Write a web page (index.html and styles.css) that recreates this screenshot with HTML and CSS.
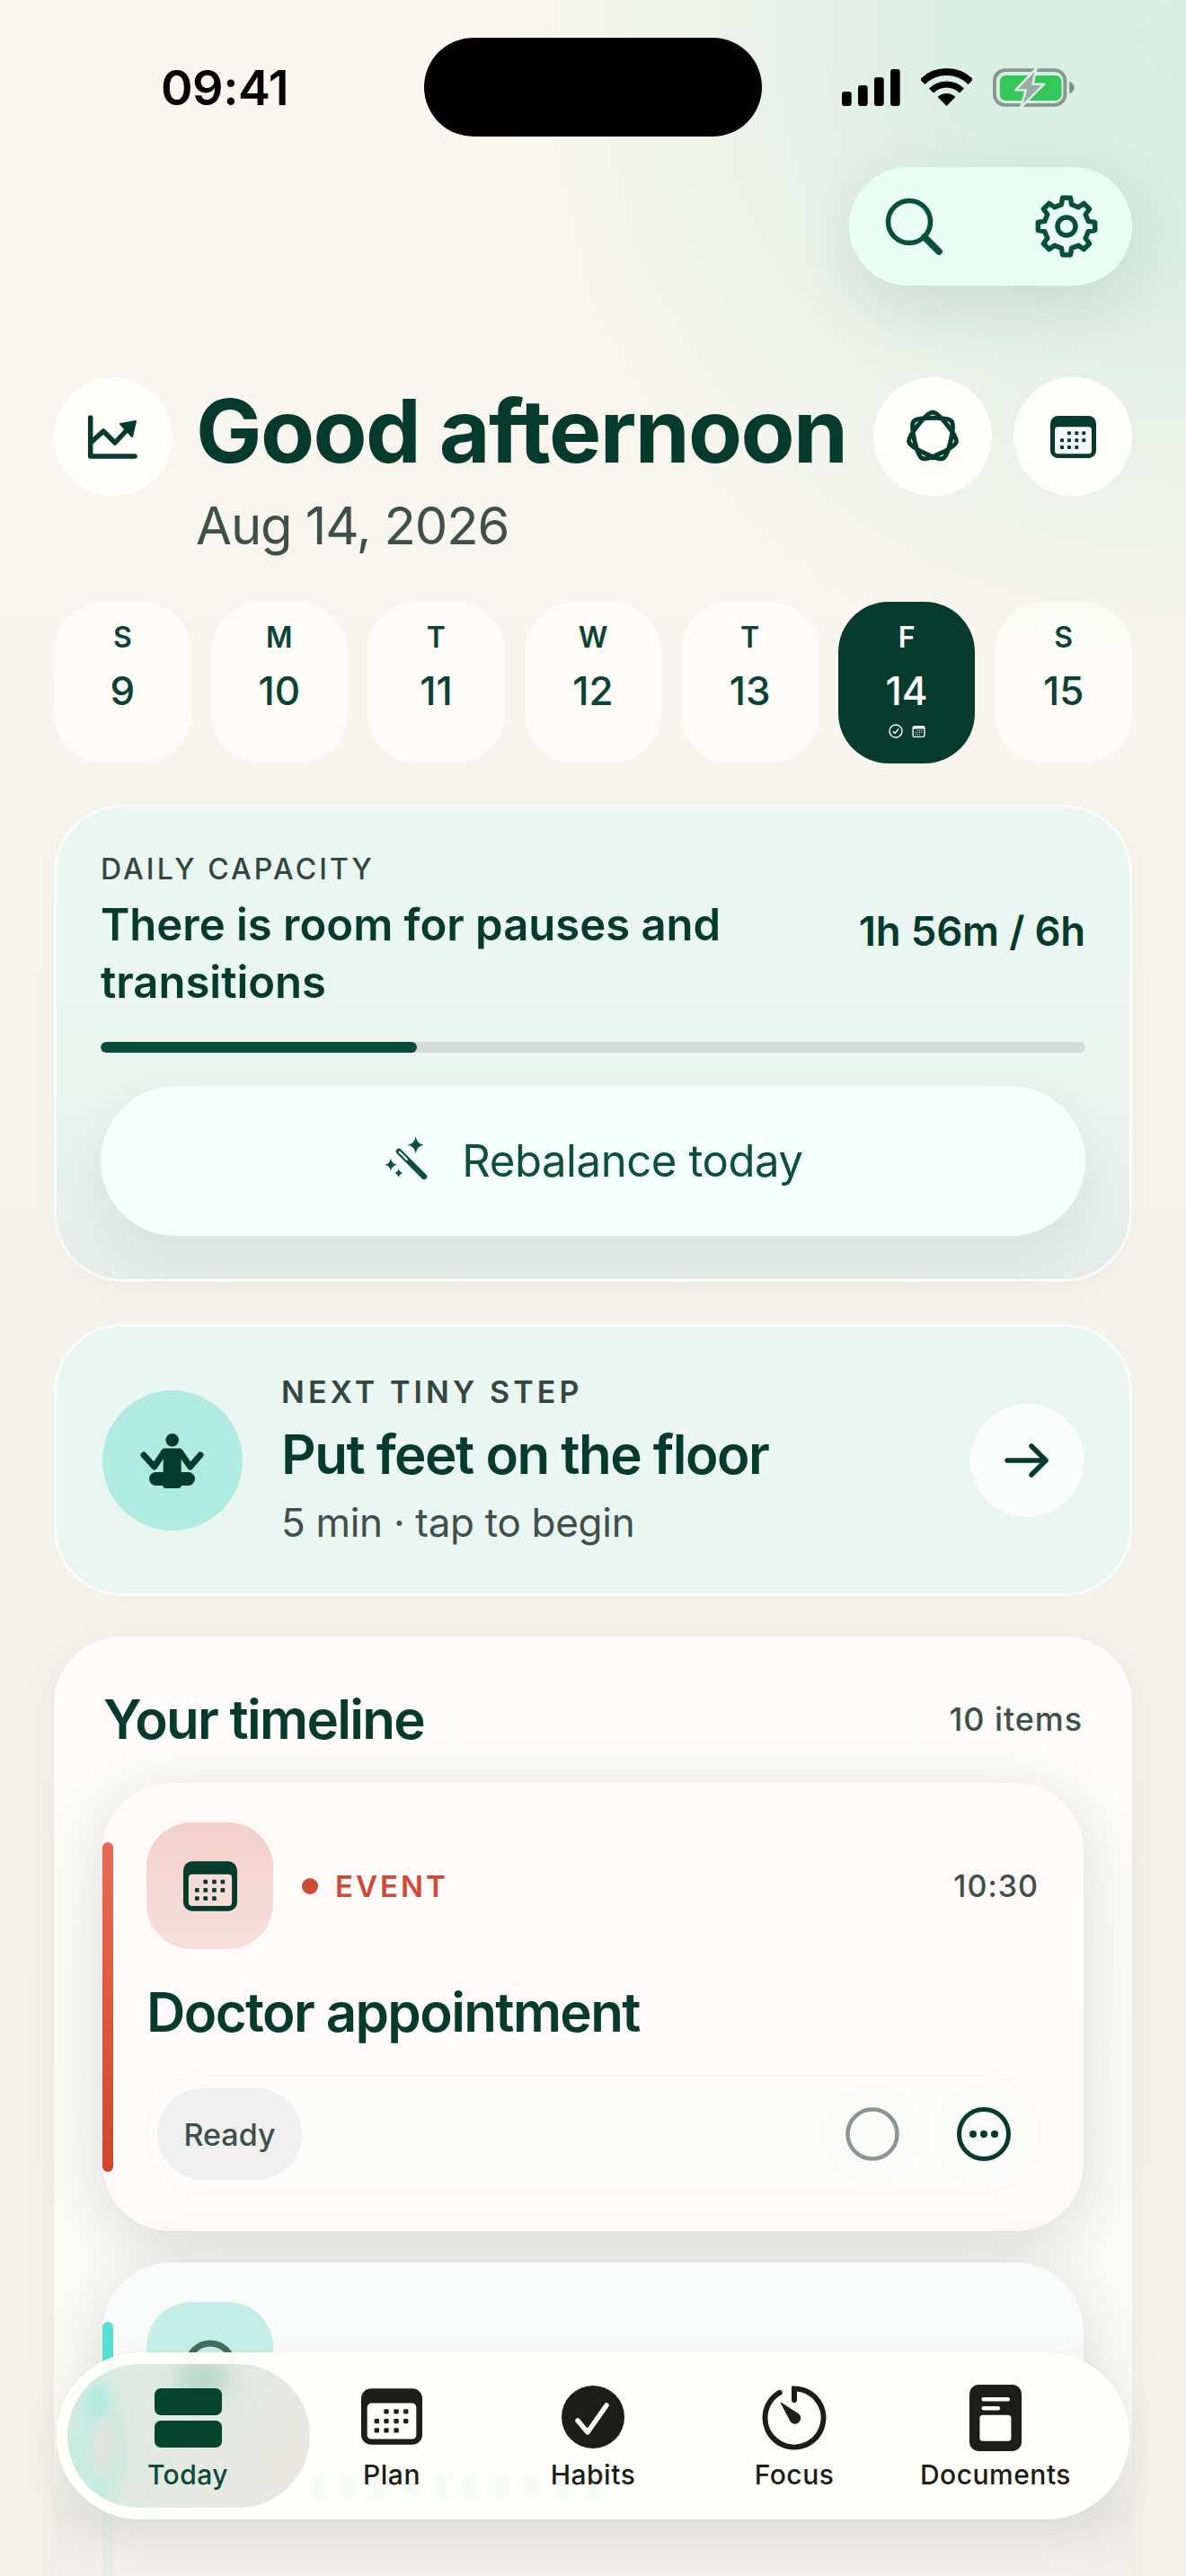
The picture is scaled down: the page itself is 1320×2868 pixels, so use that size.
FILE: index.html
```html
<!DOCTYPE html>
<html lang="en">
<head>
<meta charset="utf-8">
<title>Today</title>
<link rel="stylesheet" href="styles.css">
</head>
<body>
<svg class="defs" width="0" height="0" aria-hidden="true">
  <symbol id="cal" viewBox="0 0 51 47">
    <rect width="51" height="47" rx="8.5" fill="currentColor"/>
    <rect class="cal-in" x="5" y="12.3" width="41" height="30" rx="3.5"/>
    <g fill="currentColor">
      <rect x="19" y="17.3" width="4" height="4" rx="1"/><rect x="27.3" y="17.3" width="4" height="4" rx="1"/><rect x="35.3" y="17.3" width="4" height="4" rx="1"/>
      <rect x="11" y="25.3" width="4" height="4" rx="1"/><rect x="19" y="25.3" width="4" height="4" rx="1"/><rect x="27.3" y="25.3" width="4" height="4" rx="1"/><rect x="35.3" y="25.3" width="4" height="4" rx="1"/>
      <rect x="11" y="33" width="4" height="4" rx="1"/><rect x="19" y="33" width="4" height="4" rx="1"/><rect x="27.3" y="33" width="4" height="4" rx="1"/>
    </g>
  </symbol>
</svg>
<div class="screen">
  <header class="status">
    <span class="clock">09:41</span>
    <span class="island"></span>
    <span class="status-icons">
      <svg class="sig" viewBox="0 0 65 41"><rect x="0" y="25" width="10.7" height="16" rx="3"/><rect x="18" y="18" width="10.7" height="23" rx="3"/><rect x="36" y="9" width="10.7" height="32" rx="3"/><rect x="54" y="0" width="10.7" height="41" rx="3"/></svg>
      <svg class="wifi" viewBox="0 0 57 42"><path class="wifi-arc" d="M1.63 15.13A38 38 0 0 1 55.37 15.13" stroke-width="8"/><path class="wifi-arc" d="M11.53 25.03A24 24 0 0 1 45.47 25.03" stroke-width="7"/><path d="M28.5 42L18.6 32.1A14 14 0 0 1 38.4 32.1Z"/></svg>
      <svg class="batt" viewBox="0 0 94 46">
        <rect x="2" y="3" width="81" height="40" rx="12" fill="none" stroke="#87968f" stroke-width="4"/>
        <path d="M88 16c3 1 5.500 3.500 5.500 7s-2.500 6-5.500 7z" fill="#7f8e87"/>
        <rect x="8" y="9" width="71" height="29" rx="7" fill="#34c759"/>
        <path d="M50 1L26 26H38L32 46L59 19H46Z" fill="#9caba4" stroke="#e2f1ea" stroke-width="2.500" stroke-linejoin="round"/>
      </svg>
    </span>
  </header>

  <div class="toolbar-row">
    <div class="toolbar">
      <svg class="tool-search" viewBox="0 0 66 66"><circle cx="28" cy="28" r="23.500"/><path d="M45 45L61 61" stroke-width="7.500"/></svg>
      <svg class="tool-gear" viewBox="-36 -36 72 72"><polygon points="-5.62,-24.36 -4.45,-31.69 4.45,-31.69 5.62,-24.36 13.25,-21.2 19.26,-25.56 25.56,-19.26 21.2,-13.25 24.36,-5.62 31.69,-4.45 31.69,4.45 24.36,5.62 21.2,13.25 25.56,19.26 19.26,25.56 13.25,21.2 5.62,24.36 4.45,31.69 -4.45,31.69 -5.62,24.36 -13.25,21.2 -19.26,25.56 -25.56,19.26 -21.2,13.25 -24.36,5.62 -31.69,4.45 -31.69,-4.45 -24.36,-5.62 -21.2,-13.25 -25.56,-19.26 -19.26,-25.56 -13.25,-21.2"/><circle r="10"/></svg>
    </div>
  </div>

  <section class="greeting">
    <div class="round">
      <svg class="round-svg" viewBox="0 0 132 132"><path class="line" d="M40.700 45V88H90"/><path class="line" d="M42 72L55 60L68 73L80 60"/><path class="solid" d="M74 52L91 49L87 66Z"/></svg>
    </div>
    <div class="greeting-text">
      <h1 class="hello">Good afternoon</h1>
      <p class="date">Aug 14, 2026</p>
    </div>
    <div class="round">
      <svg class="round-svg" viewBox="-66 -66 132 132">
        <path class="star" d="M0 -27C6.500 -27 27.770 -.33 26.320 6.010C24.870 12.350 -5.850 27.150 -11.710 24.330C-17.570 21.510 -25.160 -11.750 -21.110 -16.830C-17.060 -21.910 17.060 -21.910 21.110 -16.830C25.160 -11.750 17.570 21.510 11.710 24.330C5.850 27.150 -24.870 12.350 -26.320 6.010C-27.770 -.33 -6.500 -27 0 -27Z"/>
      </svg>
    </div>
    <div class="round round-last">
      <svg class="ic-cal head-cal"><use href="#cal"/></svg>
    </div>
  </section>

  <nav class="days">
    <div class="day"><b>S</b><strong>9</strong></div>
    <div class="day"><b>M</b><strong>10</strong></div>
    <div class="day"><b>T</b><strong>11</strong></div>
    <div class="day"><b>W</b><strong>12</strong></div>
    <div class="day"><b>T</b><strong>13</strong></div>
    <div class="day day-on"><b>F</b><strong>14</strong>
      <span class="day-marks">
        <svg class="mark" viewBox="0 0 16 16"><circle cx="8" cy="8" r="7"/><path d="M4.800 8.300L7 10.500L11 5.500"/></svg>
        <svg class="ic-cal mark-cal"><use href="#cal"/></svg>
      </span>
    </div>
    <div class="day"><b>S</b><strong>15</strong></div>
  </nav>

  <section class="capacity">
    <div class="eyebrow">DAILY CAPACITY</div>
    <div class="capacity-row">
      <h2 class="capacity-title">There is room for pauses and transitions</h2>
      <span class="capacity-value">1h 56m / 6h</span>
    </div>
    <div class="track"><div class="track-fill" style="width:32.1%"></div></div>
    <button class="rebalance">
      <svg class="wand" viewBox="0 0 60 60"><path class="wand-stick" d="M18 18L46 46"/><path class="wand-hole" d="M18.500 18.500L27 27"/><path class="spark" d="M36.700 1.500Q38 9.500 45.700 10.700Q38 12 36.700 20Q35.400 12 27.700 10.700Q35.400 9.500 36.700 1.500Z"/><path class="spark" d="M9 25.700Q10 31.700 16 32.700Q10 33.700 9 39.700Q8 33.700 2 32.700Q8 31.700 9 25.700Z"/><path class="spark" d="M17.700 37Q18.500 41.200 22.700 42Q18.500 42.800 17.700 47Q16.900 42.800 12.700 42Q16.900 41.200 17.700 37Z"/></svg>
      <span>Rebalance today</span>
    </button>
  </section>

  <section class="next">
    <div class="next-badge">
      <svg viewBox="0 0 156 156"><circle cx="77.700" cy="55.300" r="7.300"/><path class="arm" d="M46 72L57.700 85L69 68H86L97.700 85L109 72"/><rect x="67.700" y="66" width="20" height="34" rx="4"/><rect x="52" y="91" width="51" height="15" rx="7.500"/><rect x="67" y="100" width="21" height="9" rx="4"/></svg>
    </div>
    <div class="next-text">
      <div class="next-label">NEXT TINY STEP</div>
      <div class="next-title">Put feet on the floor</div>
      <div class="next-sub">5 min · tap to begin</div>
    </div>
    <button class="next-go">
      <svg viewBox="0 0 52 40"><path d="M4 20H47M31 4L47 20L31 36"/></svg>
    </button>
  </section>

  <section class="timeline">
    <div class="timeline-head">
      <h2 class="timeline-title">Your timeline</h2>
      <span class="timeline-count">10 items</span>
    </div>
    <article class="item item-event">
      <span class="item-bar"></span>
      <div class="item-head">
        <div class="tile tile-event"><svg class="ic-cal tile-cal"><use href="#cal"/></svg></div>
        <span class="kind-dot"></span>
        <span class="kind">EVENT</span>
        <span class="item-time">10:30</span>
      </div>
      <h3 class="item-title">Doctor appointment</h3>
      <div class="item-row">
        <span class="chip">Ready</span>
        <span class="act act-first"><svg viewBox="0 0 60 60"><circle cx="30" cy="30" r="27.500" class="ring-grey"/></svg></span>
        <span class="act"><svg viewBox="0 0 60 60"><circle cx="30" cy="30" r="27.500" class="ring-dark"/><circle cx="18" cy="30" r="4"/><circle cx="30" cy="30" r="4"/><circle cx="42" cy="30" r="4"/></svg></span>
      </div>
    </article>
    <article class="item item-task">
      <span class="item-bar bar-teal"></span>
      <div class="item-head">
        <div class="tile tile-teal"><svg class="tile-ring" viewBox="0 0 58 58"><circle cx="29" cy="29" r="25"/></svg></div>
      </div>
    </article>
  </section>

  <div class="fade"></div>

  <nav class="tabs">
    <div class="lens"><i class="blob blob-a"></i><i class="blob blob-b"></i><i class="blob blob-c"></i><i class="blob blob-d"></i></div>
    <i class="ghost"></i>
    <a class="tab tab-on">
      <svg class="tab-ic ic-today" viewBox="0 0 75 66"><rect width="75" height="30" rx="7"/><rect y="36" width="75" height="30" rx="7"/></svg>
      <span>Today</span>
    </a>
    <a class="tab">
      <svg class="ic-cal tab-cal"><use href="#cal"/></svg>
      <span>Plan</span>
    </a>
    <a class="tab">
      <svg class="tab-ic ic-habit" viewBox="0 0 70 70"><circle cx="35" cy="35" r="35"/><path d="M18 39L29 52L50 22"/></svg>
      <span>Habits</span>
    </a>
    <a class="tab">
      <svg class="tab-ic ic-focus" viewBox="0 0 72 72"><path class="focus-ring" d="M36 16V3.500A32.500 32.500 0 1 1 19.750 7.850"/><path class="focus-hand" d="M21 19L41 32A6 6 0 1 1 32.500 40.500Z"/></svg>
      <span>Focus</span>
    </a>
    <a class="tab">
      <svg class="tab-ic ic-doc" viewBox="0 0 58 74"><rect width="58" height="74" rx="10"/><rect class="doc-in" x="13.500" y="14" width="31.500" height="4.500" rx="2"/><rect class="doc-in" x="13.500" y="24" width="20.500" height="4.500" rx="2"/><rect class="doc-in" x="11.400" y="33.700" width="35" height="29" rx="3.500"/></svg>
      <span>Documents</span>
    </a>
  </nav>
</div>
</body>
</html>
```

FILE: styles.css
```css
* { box-sizing: border-box; }
html, body { margin: 0; padding: 0; width: 1320px; height: 2868px; overflow: hidden; }
body { background: #f7f4ee; font-family: Inter, "Liberation Sans", sans-serif; }
.defs { position: absolute; top: 0; left: 0; }
h1, h2, h3, p { margin: 0; }
button { border: 0; font: inherit; padding: 0; }

.screen {
  position: relative;
  width: 1320px;
  height: 2868px;
  overflow: hidden;
  padding: 42px 60px 0;
  background:
    radial-gradient(ellipse 780px 720px at 1320px 40px, #d8eee4 0%, #d9eee4 30%, rgba(222,238,229,.55) 62%, rgba(240,243,235,0) 100%),
    linear-gradient(#faf7f0 0%, #f7f4ed 40%, #f3f1ea 70%, #f6f3ed 100%);
}

/* status */
.status { display: flex; align-items: center; height: 110px; color: #000; }
.clock { width: 412px; padding-left: 119px; font-size: 54px; font-weight: 600; letter-spacing: -.5px; }
.island { width: 376px; height: 110px; border-radius: 55px; background: #000; }
.status-icons { display: flex; align-items: center; margin-left: 89px; }
.sig { width: 65px; height: 41px; margin-right: 23px; }
.wifi { width: 57px; height: 42px; margin-right: 23px; }
.wifi-arc { fill: none; stroke: #000; }
.batt { width: 91px; height: 45px; }

/* toolbar */
.toolbar-row { display: flex; justify-content: flex-end; margin-top: 34px; }
.toolbar {
  display: flex; align-items: center; justify-content: space-between;
  width: 315px; height: 132px; padding: 0 37px 0 39px;
  border-radius: 66px; background: #e9fff6;
  box-shadow: 0 22px 70px rgba(22,80,60,.13);
}
.tool-search { width: 66px; height: 66px; }
.tool-search circle, .tool-search path { fill: none; stroke: #0a4f3c; stroke-width: 5.500; stroke-linecap: round; }
.tool-search path { stroke-width: 7.500; }
.tool-gear { width: 72px; height: 72px; }
.tool-gear polygon, .tool-gear circle { fill: none; stroke: #0a4f3c; stroke-width: 5.500; stroke-linejoin: round; }

/* greeting */
.greeting { display: flex; align-items: flex-start; margin-top: 102px; height: 201px; }
.round { flex: none; display: flex; align-items: center; justify-content: center; width: 132px; height: 132px; border-radius: 50%; background: #fdfdfa; margin-left: 0; }
.round-last { margin-left: 24px; }
.round-svg { width: 132px; height: 132px; }
.line { fill: none; stroke: #063a2d; stroke-width: 5.500; stroke-linecap: round; stroke-linejoin: round; }
.solid { fill: #063a2d; stroke: #063a2d; stroke-width: 2; stroke-linejoin: round; }
.star { fill: none; stroke: #063a2d; stroke-width: 5; stroke-linejoin: round; }
.ic-cal { display: block; color: #063a2d; }
.cal-in { fill: var(--cal-in, #fff); }
.head-cal { width: 51px; height: 47px; --cal-in: #f4f9f6; }
.greeting-text { flex: 1; padding-left: 26px; min-width: 0; }
.hello { font-size: 98px; line-height: 120px; font-weight: 700; color: #063a2d; letter-spacing: -1.6px; white-space: nowrap; }
.date { margin-top: 9px; font-size: 58px; line-height: 72px; font-weight: 400; color: #3f4f49; letter-spacing: -1.1px; }

/* days */
.days { display: grid; grid-template-columns: repeat(7, 1fr); gap: 22px; margin-top: 49px; height: 180px; }
.day {
  display: flex; flex-direction: column; align-items: center;
  height: 180px; padding-top: 20px; border-radius: 56px;
  background: rgba(255,255,252,.62); color: #0a4334;
}
.day b { font-size: 32px; line-height: 40px; font-weight: 600; }
.day strong { margin-top: 11px; font-size: 44px; line-height: 56px; font-weight: 500; }
.day-on { background: #063b2e; color: #fff; }
.day-marks { display: flex; align-items: center; gap: 10px; margin-top: 9px; }
.mark { width: 16px; height: 16px; }
.mark circle, .mark path { fill: none; stroke: #fff; stroke-width: 1.400; }
.mark-cal { width: 15px; height: 13px; color: #fff; --cal-in: #063b2e; }

/* capacity */
.capacity {
  margin-top: 46px; height: 531px; padding: 51px 49px 0;
  border: 3px solid rgba(255,255,255,.7); border-radius: 76px;
  background: linear-gradient(#eaf7f2, #eaf5f0 55%, #e4ede9);
  box-shadow: 0 10px 30px rgba(90,80,60,.04);
}
.eyebrow { font-size: 32px; line-height: 36px; font-weight: 500; letter-spacing: 3.1px; color: #33463f; }
.capacity-row { display: flex; justify-content: space-between; align-items: flex-start; margin-top: 12px; }
.capacity-title { width: 760px; font-size: 49px; line-height: 64px; font-weight: 600; color: #063a2d; letter-spacing: 0; }
.capacity-value { margin-top: 7px; font-size: 45.5px; line-height: 64px; font-weight: 600; color: #063a2d; white-space: nowrap; letter-spacing: -.2px; }
.track { height: 12px; margin-top: 34px; border-radius: 6px; background: #d2dbd7; overflow: hidden; }
.track-fill { height: 12px; border-radius: 6px; background: #0a4a38; }
.rebalance {
  display: flex; align-items: center; justify-content: center; gap: 28px;
  width: 100%; height: 167px; margin-top: 37px; border-radius: 84px;
  background: #f4fffb; color: #0b4f3c; font-size: 49px; letter-spacing: -.4px;
  box-shadow: 0 20px 50px rgba(40,70,60,.07);
}
.wand { width: 60px; height: 60px; margin-top: 2px; }
.wand-stick { fill: none; stroke: #0b4f3c; stroke-width: 6.500; stroke-linecap: round; }
.wand-hole { fill: none; stroke: #f4fffb; stroke-width: 2; stroke-linecap: round; }
.spark { fill: #0b4f3c; }

/* next */
.next {
  display: flex; align-items: center;
  margin-top: 47px; height: 303px; padding: 0 51px;
  border: 3px solid rgba(255,255,255,.72); border-radius: 76px;
  background: #eaf6f2;
}
.next-badge { flex: none; width: 156px; height: 156px; border-radius: 50%; background: #b0ebe2; }
.next-badge svg { display: block; width: 156px; height: 156px; fill: #063a2d; }
.next-badge .arm { fill: none; stroke: #063a2d; stroke-width: 7; stroke-linecap: round; stroke-linejoin: round; }
.next-text { flex: 1; padding-left: 43px; padding-top: 3px; }
.next-label { font-size: 34px; line-height: 36px; font-weight: 600; letter-spacing: 4.1px; color: #33463f; }
.next-title { margin-top: 15px; font-size: 60px; line-height: 72px; font-weight: 600; letter-spacing: -1.5px; color: #063a2d; }
.next-sub { margin-top: 12px; font-size: 44px; line-height: 56px; color: #3f4f49; letter-spacing: -.3px; }
.next-go { flex: none; display: flex; align-items: center; justify-content: center; width: 126px; height: 126px; border-radius: 50%; background: #fbfdfc; }
.next-go svg { width: 52px; height: 40px; fill: none; stroke: #063a2d; stroke-width: 5.500; stroke-linecap: round; stroke-linejoin: round; }

/* timeline */
.timeline {
  margin-top: 45px; height: 1300px; padding: 62px 54px 0;
  border-radius: 76px;
  background: linear-gradient(#fdfcfa, #fbfbf8 50%, #f8f7f4);
  box-shadow: 0 10px 40px rgba(60,60,50,.05);
}
.timeline-head { display: flex; align-items: center; justify-content: space-between; height: 60px; padding: 0 1px; }
.timeline-title { font-size: 60px; line-height: 60px; font-weight: 600; color: #063a2d; letter-spacing: -1.7px; }
.timeline-count { font-size: 36px; font-weight: 500; color: #3f4f49; letter-spacing: .9px; }
.item {
  position: relative; margin-top: 41px; padding: 44px 48px 41px 49px;
  border-radius: 76px; background: #fdfaf9;
  box-shadow: 0 16px 70px rgba(45,60,55,.16);
}
.item-task { margin-top: 35px; height: 500px; background: linear-gradient(#f9fbfa, #f4f8f7); }
.item-bar { position: absolute; left: 0; top: 66px; width: 12px; height: 367px; border-radius: 6px; background: linear-gradient(#ea6a55, #cf4630); }
.bar-teal { height: 400px; background: #57e0d0; }
.item-head { display: flex; align-items: center; }
.tile { flex: none; display: flex; align-items: center; justify-content: center; width: 141px; height: 141px; border-radius: 50px; }
.tile-event { background: linear-gradient(#f3d0cb, #f6dfda); }
.tile-teal { background: linear-gradient(#c2eee7, #cdf0ea); }
.tile-cal { width: 60px; height: 56px; --cal-in: #f6dcd7; }
.tile-ring { width: 58px; height: 58px; fill: none; stroke: #3f6e60; stroke-width: 7; }
.kind-dot { width: 18px; height: 18px; margin-left: 32px; border-radius: 50%; background: #d04a35; }
.kind { margin-left: 19px; font-size: 33px; font-weight: 600; letter-spacing: 3px; color: #d04a35; }
.item-time { margin-left: auto; padding-right: 2px; font-size: 34px; font-weight: 500; letter-spacing: 1px; color: #3f4f49; }
.item-title { margin-top: 34px; font-size: 60px; line-height: 72px; font-weight: 600; letter-spacing: -1.6px; color: #063a2d; white-space: nowrap; }
.item-row {
  display: flex; align-items: center; gap: 16px;
  height: 134px; margin-top: 33px; padding: 0 6px 0 9px;
  border: 3px solid #fbf7f5; border-radius: 67px; background: #fbfbfa;
}
.chip { display: flex; align-items: center; justify-content: center; width: 161px; height: 102px; border-radius: 51px; background: #eff0ef; font-size: 34px; font-weight: 500; color: #3f4f49; }
.act { display: flex; align-items: center; justify-content: center; width: 108px; height: 108px; border-radius: 50%; background: #fafaf9; }
.act-first { margin-left: auto; }
.act svg { width: 60px; height: 60px; fill: #063a2d; }
.ring-grey { fill: none; stroke: #8b9691; stroke-width: 4.500; }
.ring-dark { fill: none; stroke: #063a2d; stroke-width: 5; }

/* bottom */
.fade {
  position: absolute; left: 60px; right: 60px; top: 2700px; bottom: 0;
  background: linear-gradient(rgba(233,232,228,0) 0, rgba(233,232,228,.92) 100px, rgba(241,239,234,.92) 168px);
}
.tabs {
  position: absolute; left: 63px; top: 2619px;
  display: grid; grid-template-columns: repeat(5, 224px); justify-content: center;
  width: 1194px; height: 186px; padding-left: 0;
  border-radius: 93px;
  background: rgba(254,254,250,.97);
  box-shadow: 0 14px 44px rgba(50,50,40,.08);
}
.lens {
  position: absolute; left: 12px; top: 13px; width: 270px; height: 160px;
  overflow: hidden; border-radius: 80px;
  background: linear-gradient(125deg, #dcebe3 0%, #e3e9e2 50%, #e8e7e2 80%);
}
.ghost {
  position: absolute; left: 285px; top: 138px; width: 330px; height: 22px;
  background: repeating-linear-gradient(90deg, rgba(215,236,226,.38) 0 12px, rgba(254,254,250,0) 12px 34px);
  filter: blur(5px);
}
.blob { position: absolute; display: block; }
.blob-a { left: 120px; top: -6px; width: 60px; height: 44px; border-radius: 50%; background: #b6d7ca; filter: blur(12px); }
.blob-b { left: 20px; top: 20px; width: 26px; height: 130px; border-radius: 13px; background: #a6ece1; filter: blur(10px); }
.blob-c { left: -10px; top: 60px; width: 70px; height: 90px; border-radius: 50%; background: #c8ebe1; filter: blur(14px); }
.blob-d { left: 30px; top: 56px; width: 20px; height: 70px; border-radius: 50%; background: #e8e4de; filter: blur(8px); }
.tab {
  position: relative; display: flex; flex-direction: column; align-items: center; justify-content: flex-end;
  height: 156px; font-size: 30px; line-height: 40px; font-weight: 500; color: #1c1c18; letter-spacing: .5px;
  white-space: nowrap;
}
.tab-on { color: #0a4a36; margin-right: 6px; }
.tab-ic { display: block; margin-bottom: 0; }
.ic-today { width: 75px; height: 66px; margin-bottom: 10px; fill: #05442f; }
.tab-cal { width: 68px; height: 63px; margin-bottom: 13px; color: #1c1c18; --cal-in: #fefefa; }
.ic-habit { width: 70px; height: 70px; margin-bottom: 9px; fill: #1c1c18; }
.ic-habit path { fill: none; stroke: #fefefa; stroke-width: 5.500; stroke-linecap: round; stroke-linejoin: round; }
.ic-focus { width: 72px; height: 72px; margin-bottom: 7px; }
.focus-ring { fill: none; stroke: #1c1c18; stroke-width: 6; stroke-linecap: round; }
.focus-hand { fill: #1c1c18; stroke: #1c1c18; stroke-width: 1; stroke-linejoin: round; }
.ic-doc { width: 58px; height: 74px; margin-bottom: 6px; fill: #1c1c18; }
.doc-in { fill: #fefefa; }
```
